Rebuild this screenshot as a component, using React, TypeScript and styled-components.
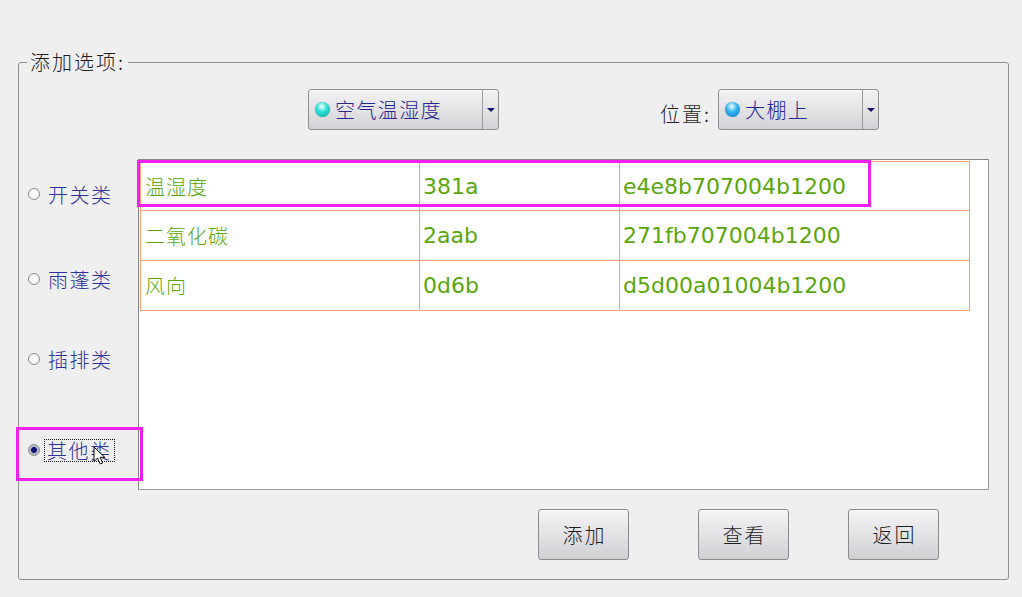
import React from "react";
import styled, { createGlobalStyle } from "styled-components";

const Global = createGlobalStyle`
  html, body { margin: 0; padding: 0; background: #efefef; }
  body {
    font-family: "Noto Sans CJK SC", "Noto Sans", sans-serif;
    width: 1022px; height: 597px; overflow: hidden;
  }
  * { box-sizing: border-box; }
`;

const CJK = `"Noto Sans CJK SC", "Noto Sans", sans-serif`;

const Page = styled.div`
  padding: 62px 0 0 18px;
  width: 1022px;
  height: 597px;
`;

const Group = styled.div`
  position: relative;
  width: 991px;
  height: 518px;
  border: 1px solid #8e8e8e;
  border-radius: 3px;
  padding-top: 26px;
  display: flex;
  flex-direction: column;
`;

const GroupTitle = styled.div`
  position: absolute;
  top: -14px;
  left: 8px;
  padding: 0 3px 0 3px;
  background: #efefef;
  font-family: ${CJK};
  font-weight: 300;
  font-size: 20px;
  line-height: 26px;
  letter-spacing: 2px;
  color: #1e1e1e;
`;

const TopRow = styled.div`
  display: flex;
  align-items: center;
  height: 41px;
  padding-left: 289px;
`;

const Combo = styled.div<{ $w: number }>`
  display: flex;
  width: ${(p) => p.$w}px;
  height: 41px;
  border: 1px solid #8f8f8f;
  border-radius: 3px;
  background: linear-gradient(#f3f3f4, #e2e2e5 55%, #d2d2d6);
  box-shadow: inset 0 1px 0 #fbfbfb;
`;

const ComboBody = styled.div`
  flex: 1;
  display: flex;
  align-items: center;
  padding-left: 6px;
  gap: 5px;
`;

const Ball = styled.span<{ $c1: string; $c2: string }>`
  width: 15px;
  height: 15px;
  border-radius: 50%;
  background: radial-gradient(circle at 45% 30%, #f4ffff 0%, ${(p) => p.$c1} 40%, ${(p) => p.$c2} 100%);
  box-shadow: 0 0 1px rgba(0, 60, 80, 0.5);
`;

const ComboText = styled.span`
  font-family: ${CJK};
  font-weight: 300;
  font-size: 20px;
  letter-spacing: 1.4px;
  color: #262690;
  line-height: 24px;
`;

const DropBtn = styled.div`
  width: 16px;
  border-left: 1px solid #9a9a9a;
  display: flex;
  align-items: center;
  justify-content: center;
`;

const Arrow = styled.span`
  width: 0;
  height: 0;
  border-left: 4px solid transparent;
  border-right: 4px solid transparent;
  border-top: 4px solid #14146e;
  margin-left: 1px;
`;

const FieldLabel = styled.span`
  margin-left: 161px;
  width: 58px;
  padding-top: 8px;
  font-family: ${CJK};
  font-weight: 300;
  font-size: 20px;
  letter-spacing: 2px;
  color: #1e1e1e;
`;

const Middle = styled.div`
  display: flex;
  margin-top: 29px;
  height: 331px;
`;

const RadioCol = styled.div`
  width: 119px;
  padding-left: 9px;
  display: flex;
  flex-direction: column;
`;

const RadioItem = styled.div<{ $mt: number }>`
  position: relative;
  display: flex;
  align-items: center;
  height: 30px;
  margin-top: ${(p) => p.$mt}px;
  gap: 4px;
`;

const RadioCircle = styled.span<{ $on?: boolean }>`
  width: 12px;
  height: 12px;
  border-radius: 50%;
  border: 1px solid #8c8c8c;
  background: ${(p) =>
    p.$on
      ? "radial-gradient(circle, #0c0c70 0%, #14147a 38%, #b4b8c4 46%, #c8cad2 100%)"
      : "radial-gradient(circle at 50% 40%, #ffffff 0%, #f4f4f4 70%, #dcdcdc 100%)"};
  flex: none;
`;

const RadioText = styled.span<{ $focus?: boolean }>`
  font-family: ${CJK};
  font-weight: 300;
  font-size: 20px;
  letter-spacing: 1.5px;
  color: #30309a;
  line-height: 21px;
  padding: 0 ${(p) => (p.$focus ? "2px" : "3px")};
  border: 1px ${(p) => (p.$focus ? "dotted #111" : "solid transparent")};
`;

const Highlight = styled.div<{ $l: number; $t: number; $w: number; $h: number }>`
  position: absolute;
  left: ${(p) => p.$l}px;
  top: ${(p) => p.$t}px;
  width: ${(p) => p.$w}px;
  height: ${(p) => p.$h}px;
  border: 3px solid #f020f0;
  pointer-events: none;
  z-index: 5;
`;

const Cursor = styled.svg`
  position: absolute;
  left: 65px;
  top: 11px;
  z-index: 6;
`;

const TableFrame = styled.div`
  position: relative;
  width: 851px;
  height: 331px;
  border: 1px solid;
  border-color: #868686 #9c9c9c #9c9c9c #868686;
  background: #ffffff;
  padding: 1px 0 0 1px;
`;

const Table = styled.table`
  border-collapse: collapse;
  table-layout: fixed;
  width: 830px;
`;

const Cell = styled.td<{ $w: number; $h: number; $cjk?: boolean }>`
  width: ${(p) => p.$w}px;
  height: ${(p) => p.$h}px;
  border: 1px solid #f5a274;
  padding: 0 0 0 ${(p) => (p.$cjk ? 4 : 3)}px;
  color: #5aa60c;
  font-family: ${(p) => (p.$cjk ? CJK : `"DejaVu Sans", "Noto Sans", sans-serif`)};
  font-weight: ${(p) => (p.$cjk ? 300 : 400)};
  font-size: ${(p) => (p.$cjk ? 20 : 22)}px;
  letter-spacing: ${(p) => (p.$cjk ? 1 : 0)}px;
  white-space: nowrap;
  vertical-align: middle;
`;

const ButtonRow = styled.div`
  display: flex;
  margin-top: 19px;
  padding-left: 519px;
`;

const Button = styled.button<{ $ml: number }>`
  width: 91px;
  height: 51px;
  margin-left: ${(p) => p.$ml}px;
  border: 1px solid #8a8a8a;
  border-radius: 3px;
  background: linear-gradient(#f4f4f5, #e3e3e6 50%, #d0d0d4);
  box-shadow: inset 0 1px 0 #fcfcfc;
  font-family: ${CJK};
  font-weight: 300;
  font-size: 20px;
  letter-spacing: 2px;
  color: #1e1e1e;
  padding: 0 0 0 2px;
`;

const rows = [
  ["温湿度", "381a", "e4e8b707004b1200"],
  ["二氧化碳", "2aab", "271fb707004b1200"],
  ["风向", "0d6b", "d5d00a01004b1200"],
];

const radios = [
  { label: "开关类", mt: 20 },
  { label: "雨蓬类", mt: 55 },
  { label: "插排类", mt: 50 },
  { label: "其他类", mt: 61, on: true },
];

export default function App() {
  return (
    <>
      <Global />
      <Page>
        <Group>
          <GroupTitle>添加选项:</GroupTitle>
          <TopRow>
            <Combo $w={191}>
              <ComboBody>
                <Ball $c1="#2ce0d4" $c2="#0aa8a0" />
                <ComboText>空气温湿度</ComboText>
              </ComboBody>
              <DropBtn>
                <Arrow />
              </DropBtn>
            </Combo>
            <FieldLabel>位置:</FieldLabel>
            <Combo $w={161}>
              <ComboBody>
                <Ball $c1="#34b4f0" $c2="#0a78c8" />
                <ComboText>大棚上</ComboText>
              </ComboBody>
              <DropBtn>
                <Arrow />
              </DropBtn>
            </Combo>
          </TopRow>
          <Middle>
            <RadioCol>
              {radios.map((r) => (
                <RadioItem key={r.label} $mt={r.mt}>
                  <RadioCircle $on={r.on} />
                  <RadioText $focus={r.on}>{r.label}</RadioText>
                  {r.on && (
                    <>
                      <Highlight $l={-12} $t={-8} $w={127} $h={54} />
                      <Cursor width="14" height="20" viewBox="0 0 14 20">
                        <path
                          d="M1 1 L1 15.5 L4.6 12.2 L7.2 18 L9.6 17 L7.1 11.3 L11.8 11.3 Z"
                          fill="#ffffff"
                          stroke="#000000"
                          strokeWidth="1"
                          strokeLinejoin="round"
                        />
                      </Cursor>
                    </>
                  )}
                </RadioItem>
              ))}
            </RadioCol>
            <TableFrame>
              <Table>
                <tbody>
                  {rows.map((r, i) => (
                    <tr key={r[0]}>
                      <Cell $w={279} $h={i === 0 ? 49 : 50} $cjk>
                        {r[0]}
                      </Cell>
                      <Cell $w={200} $h={i === 0 ? 49 : 50}>
                        {r[1]}
                      </Cell>
                      <Cell $w={350} $h={i === 0 ? 49 : 50}>
                        {r[2]}
                      </Cell>
                    </tr>
                  ))}
                </tbody>
              </Table>
              <Highlight $l={-2} $t={0} $w={734} $h={47} />
            </TableFrame>
          </Middle>
          <ButtonRow>
            <Button $ml={0}>添加</Button>
            <Button $ml={69}>查看</Button>
            <Button $ml={59}>返回</Button>
          </ButtonRow>
        </Group>
      </Page>
    </>
  );
}
